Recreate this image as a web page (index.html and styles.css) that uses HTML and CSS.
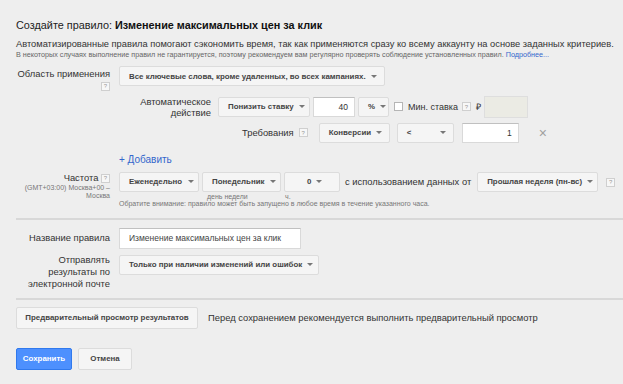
FILE: index.html
```html
<!DOCTYPE html>
<html lang="ru">
<head>
<meta charset="UTF-8" />
<title>Создайте правило</title>
<link rel="stylesheet" href="styles.css">
</head>
<body>

<div class="page">
  <h1 class="title">Создайте правило: <b>Изменение максимальных цен за клик</b></h1>
  <p class="intro">Автоматизированные правила помогают сэкономить время, так как применяются сразу ко всему аккаунту на основе заданных критериев.</p>
  <p class="note">В некоторых случаях выполнение правил не гарантируется, поэтому рекомендуем вам регулярно проверять соблюдение установленных правил. <a href="#">Подробнее...</a></p>

  <div class="row row-scope">
    <div class="label">Область применения<br><span class="help">?</span></div>
    <div class="field">
      <span class="select">Все ключевые слова, кроме удаленных, во всех кампаниях. <i class="caret"></i></span>
    </div>
  </div>

  <div class="row row-action">
    <div></div>
    <div class="field">
      <div class="action">
        <div class="label">Автоматическое действие</div>
        <div class="controls">
          <span class="select sel-action">Понизить ставку <i class="caret"></i></span>
          <span class="input num-40">40</span>
          <span class="select sel-unit">% <i class="caret"></i></span>
          <span class="check"></span>
          <span class="plain min-bid">Мин. ставка</span><span class="help">?</span>
          <span class="plain rub">₽</span>
          <span class="input disabled"></span>
        </div>
      </div>
      <div class="req">
        <span class="plain req-label">Требования</span><span class="help">?</span>
        <span class="select sel-metric">Конверсии <i class="caret"></i></span>
        <span class="select sel-op">&lt; <i class="caret"></i></span>
        <span class="input num-1">1</span>
        <span class="remove">×</span>
      </div>
      <a class="add" href="#">+ Добавить</a>
    </div>
  </div>

  <div class="row row-freq">
    <div class="label">Частота <span class="help">?</span>
      <div class="tz">(GMT+03:00) Москва+00 –<br>Москва</div>
    </div>
    <div class="field">
      <div class="controls">
        <span class="cell"><span class="select sel-period">Еженедельно <i class="caret"></i></span></span>
        <span class="cell"><span class="select sel-day">Понедельник <i class="caret"></i></span><span class="hint">день недели</span></span>
        <span class="cell"><span class="select sel-hour">0 <i class="caret"></i></span><span class="hint">ч.</span></span>
        <span class="plain using">с использованием данных от</span>
        <span class="cell"><span class="select sel-range">Прошлая неделя (пн-вс) <i class="caret"></i></span></span>
        <span class="help">?</span>
      </div>
      <div class="small-note">Обратите внимание: правило может быть запущено в любое время в течение указанного часа.</div>
    </div>
  </div>

  <hr class="sep sep-first">

  <div class="row row-name">
    <div class="label">Название правила</div>
    <div class="field">
      <span class="input text-name">Изменение максимальных цен за клик</span>
    </div>
  </div>

  <div class="row row-mail">
    <div class="label">Отправлять результаты по электронной почте</div>
    <div class="field">
      <span class="select sel-mail">Только при наличии изменений или ошибок <i class="caret"></i></span>
    </div>
  </div>

  <hr class="sep sep-second">

  <div class="preview">
    <button class="btn btn-preview">Предварительный просмотр результатов</button>
    <span class="preview-text">Перед сохранением рекомендуется выполнить предварительный просмотр</span>
  </div>

  <div class="actions">
    <button class="btn btn-primary">Сохранить</button>
    <button class="btn btn-cancel">Отмена</button>
  </div>
</div>

</body>
</html>
```

FILE: styles.css
```css
body {
  margin: 0;
  background: #eeeeee;
  font-family: "Liberation Sans", Arial, sans-serif;
  color: #333;
  overflow: hidden;
}
.page {
  padding: 18px 0 0 16px;
}
.title {
  font-size: 10.85px;
  font-weight: normal;
  color: #222;
  margin: 0 0 6px;
  line-height: 14px;
}
.title b {
  color: #111;
}
.intro {
  font-size: 9.3px;
  margin: 0;
  line-height: 12px;
  white-space: nowrap;
}
.note {
  font-size: 7.2px;
  color: #666;
  margin: 0;
  line-height: 9px;
  white-space: nowrap;
}
.note a, .add {
  color: #3366cc;
  text-decoration: none;
}

.row {
  display: grid;
  grid-template-columns: 94px 1fr;
  column-gap: 9px;
}
.label {
  font-size: 9.4px;
  text-align: right;
  line-height: 11px;
  color: #333;
}
.row-scope {
  margin-top: 7px;
}
.row-scope .label {
  padding-top: 2px;
  white-space: nowrap;
}
.row-scope .help {
  margin-top: 1px;
}
.field {
  font-size: 8px;
}

.select {
  display: inline-flex;
  align-items: center;
  justify-content: space-between;
  box-sizing: border-box;
  height: 20px;
  padding: 0 7px 0 9px;
  background: #f5f5f5;
  border: 1px solid #dcdcdc;
  border-radius: 2px;
  font-size: 7.9px;
  font-weight: bold;
  color: #444;
  white-space: nowrap;
}
.caret {
  display: inline-block;
  width: 0;
  height: 0;
  margin-left: 5px;
  border-left: 3px solid transparent;
  border-right: 3px solid transparent;
  border-top: 3px solid #777;
}
.input {
  display: inline-flex;
  align-items: center;
  justify-content: flex-end;
  box-sizing: border-box;
  height: 20px;
  padding: 0 6px;
  background: #fff;
  border: 1px solid #d9d9d9;
  border-top-color: #c0c0c0;
  font-size: 8.5px;
  color: #333;
}
.input.disabled {
  width: 44px;
  height: 22px;
  background: #ebebe4;
  border-color: #dedede;
}
.help {
  display: inline-flex;
  align-items: center;
  justify-content: center;
  box-sizing: border-box;
  width: 9px;
  height: 9px;
  border: 1px solid #cfcfcf;
  background: #f7f7f7;
  font-size: 6px;
  color: #999;
  vertical-align: middle;
}
.plain {
  font-size: 9.4px;
  color: #333;
  white-space: nowrap;
}

.row-action {
  margin-top: 5px;
}
.action {
  display: grid;
  grid-template-columns: 92px 1fr;
  column-gap: 7px;
}
.controls {
  display: flex;
  align-items: center;
  gap: 3px;
}
.sel-action { width: 92px; }
.num-40 { width: 42px; }
.sel-unit { width: 31px; }
.check {
  width: 9px;
  height: 9px;
  box-sizing: border-box;
  background: #fff;
  border: 1px solid #b5b5b5;
  margin: 0 2px 0 2px;
}
.min-bid { font-size: 9px; }
.controls .help { margin-left: 1px; }
.rub { margin: 0 0 0 2px; font-size: 9px; }

.req {
  display: flex;
  align-items: center;
  margin: 5px 0 0 123px;
}
.req-label { margin-right: 5px; }
.sel-metric { width: 71px; margin-left: 11px; }
.sel-op { width: 57px; margin-left: 7px; }
.num-1 { width: 57px; margin-left: 8px; }
.remove {
  margin-left: 20px;
  font-size: 14px;
  color: #a0a0a0;
}
.add {
  display: block;
  font-size: 10px;
  line-height: 12px;
  margin-top: 11px;
}

.row-freq {
  margin-top: 6px;
}
.row-freq .label {
  white-space: nowrap;
}
.tz {
  font-size: 7px;
  color: #777;
  line-height: 8px;
  margin-top: 1px;
}
.row-freq .controls {
  align-items: flex-start;
}
.cell {
  display: flex;
  flex-direction: column;
}
.hint {
  font-size: 7px;
  color: #777;
  line-height: 9px;
  padding-left: 1px;
}
.sel-day .caret, .sel-period .caret { margin-left: 6px; }
.sel-period { width: 80px; }
.sel-day { width: 79px; }
.sel-day + .hint { padding-left: 5px; }
.sel-hour {
  width: 56px;
  justify-content: flex-start;
  padding-left: 22px;
}
.using {
  line-height: 20px;
  margin: 0 3px 0 2px;
}
.sel-range { width: 121px; }
.row-freq .controls > .help { margin: 6px 0 0 5px; }
.small-note {
  font-size: 7px;
  color: #777;
  line-height: 8px;
  margin-top: -1px;
}

.sep {
  border: 0;
  border-top: 2px solid #d8d8d8;
  margin: 0;
}
.sep-first { margin-top: 10px; }
.sep-second { margin-top: 8px; }

.row-name {
  margin-top: 8px;
}
.row-name .label { padding-top: 4px; }
.text-name {
  justify-content: flex-start;
  width: 182px;
  height: 21px;
  padding-left: 9px;
  font-size: 8.5px;
  color: #444;
}
.row-mail {
  margin-top: 6px;
}
.row-mail .label {
  line-height: 12px;
  margin-top: -1px;
}
.sel-mail { width: 200px; }

.preview {
  display: flex;
  align-items: center;
  gap: 10px;
  margin-top: 7px;
}
.btn {
  box-sizing: border-box;
  height: 22px;
  padding: 0;
  background: #f5f5f5;
  border: 1px solid #dcdcdc;
  border-radius: 2px;
  font-family: "Liberation Sans", Arial, sans-serif;
  font-size: 7.9px;
  font-weight: bold;
  color: #444;
  white-space: nowrap;
}
.btn-preview {
  width: 182px;
}
.preview-text {
  font-size: 9.4px;
  color: #333;
}
.actions {
  display: flex;
  gap: 6px;
  margin-top: 19px;
}
.btn-primary {
  width: 56px;
  background: #4d90fe;
  border-color: #3079ed;
  color: #fff;
}
.btn-cancel {
  width: 54px;
}
```
